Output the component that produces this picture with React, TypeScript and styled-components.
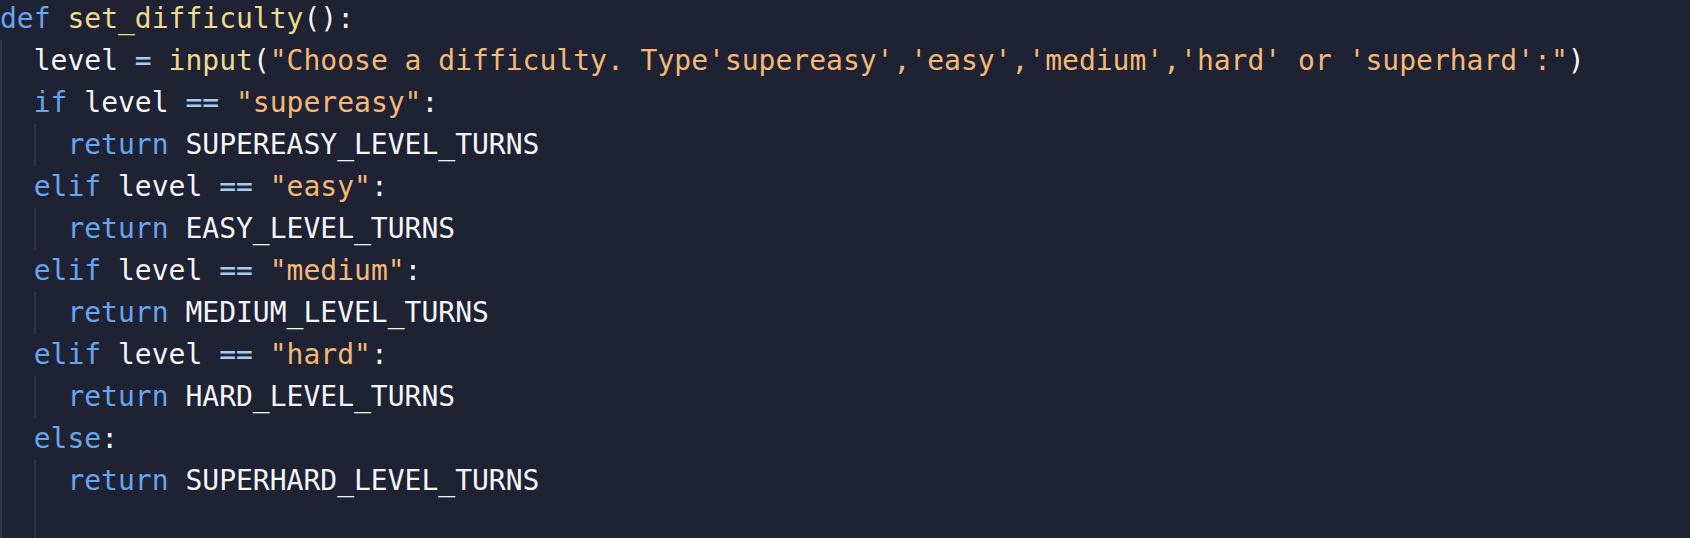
import React from "react";
import styled, { createGlobalStyle } from "styled-components";

const Global = createGlobalStyle`
  html, body {
    margin: 0;
    padding: 0;
    background: #1e2233;
    overflow: hidden;
  }
`;

const Editor = styled.div`
  width: 1690px;
  height: 538px;
  overflow: hidden;
  background: #1e2233;
  font-family: "DejaVu Sans Mono", "Liberation Mono", monospace;
  font-size: 28px;
  color: #f4f6fa;
`;

const Lines = styled.div`
  display: flex;
  flex-direction: column;
  margin-top: -2px;
`;

const Line = styled.div`
  display: flex;
  align-items: stretch;
  height: 42px;
  line-height: 42px;
  white-space: pre;
`;

const Guide = styled.span`
  display: inline-block;
  width: 2ch;
  flex: none;
  box-shadow: inset 2px 0 0 #30354a;
`;

type Kind = "kw" | "fn" | "str" | "op" | "txt";

const colors: Record<Kind, string> = {
  kw: "#66a6ef",
  fn: "#eedb8e",
  str: "#f4b976",
  op: "#a4cdf4",
  txt: "#f4f6fa",
};

const Tok = styled.span<{ $k: Kind }>`
  color: ${(p) => colors[p.$k]};
`;

type T = [Kind, string];

const code: { indent: number; toks: T[] }[] = [
  { indent: 0, toks: [["kw", "def"], ["txt", " "], ["fn", "set_difficulty"], ["txt", "():"]] },
  {
    indent: 1,
    toks: [
      ["txt", "level "],
      ["op", "="],
      ["txt", " "],
      ["fn", "input"],
      ["txt", "("],
      ["str", "\"Choose a difficulty. Type'supereasy','easy','medium','hard' or 'superhard':\""],
      ["txt", ")"],
    ],
  },
  { indent: 1, toks: [["kw", "if"], ["txt", " level "], ["op", "=="], ["txt", " "], ["str", "\"supereasy\""], ["txt", ":"]] },
  { indent: 2, toks: [["kw", "return"], ["txt", " SUPEREASY_LEVEL_TURNS"]] },
  { indent: 1, toks: [["kw", "elif"], ["txt", " level "], ["op", "=="], ["txt", " "], ["str", "\"easy\""], ["txt", ":"]] },
  { indent: 2, toks: [["kw", "return"], ["txt", " EASY_LEVEL_TURNS"]] },
  { indent: 1, toks: [["kw", "elif"], ["txt", " level "], ["op", "=="], ["txt", " "], ["str", "\"medium\""], ["txt", ":"]] },
  { indent: 2, toks: [["kw", "return"], ["txt", " MEDIUM_LEVEL_TURNS"]] },
  { indent: 1, toks: [["kw", "elif"], ["txt", " level "], ["op", "=="], ["txt", " "], ["str", "\"hard\""], ["txt", ":"]] },
  { indent: 2, toks: [["kw", "return"], ["txt", " HARD_LEVEL_TURNS"]] },
  { indent: 1, toks: [["kw", "else"], ["txt", ":"]] },
  { indent: 2, toks: [["kw", "return"], ["txt", " SUPERHARD_LEVEL_TURNS"]] },
  { indent: 2, toks: [] },
];

export default function App() {
  return (
    <>
      <Global />
      <Editor>
        <Lines>
          {code.map((line, i) => (
            <Line key={i}>
              {Array.from({ length: line.indent }).map((_, g) => (
                <Guide key={g} />
              ))}
              <span>
                {line.toks.map(([k, s], j) => (
                  <Tok key={j} $k={k}>
                    {s}
                  </Tok>
                ))}
              </span>
            </Line>
          ))}
        </Lines>
      </Editor>
    </>
  );
}
